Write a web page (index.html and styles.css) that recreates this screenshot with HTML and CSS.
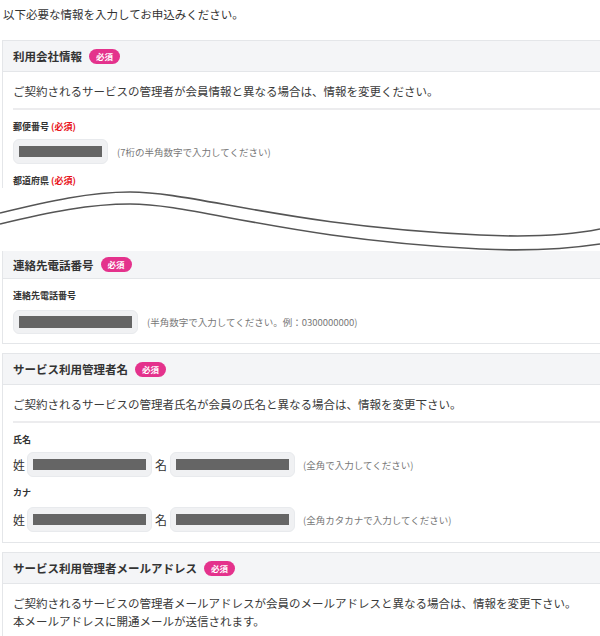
FILE: index.html
```html
<!DOCTYPE html>
<html lang="ja">
<head>
<meta charset="utf-8">
<link rel="stylesheet" href="styles.css">
</head>
<body>
<div class="page">
  <p class="intro">以下必要な情報を入力してお申込みください。</p>

  <section class="card card-cut-bottom">
    <div class="card-head"><h2 class="title">利用会社情報</h2><span class="badge">必須</span></div>
    <div class="card-body">
      <p class="desc">ご契約されるサービスの管理者が会員情報と異なる場合は、情報を変更ください。</p>
      <div class="sep"></div>
      <div class="label">郵便番号 <span class="req">(必須)</span></div>
      <div class="row">
        <div class="input w-zip"><div class="fill"></div></div>
        <span class="hint">(7桁の半角数字で入力してください)</span>
      </div>
      <div class="label label-next">都道府県 <span class="req">(必須)</span></div>
    </div>
  </section>

  <div class="break">
    <svg class="break-svg" width="600" height="63" viewBox="0 0 600 63">
      <path d="M0,25 C50,13 90,4 130,4 C195,4 285,38 480,47 C540,50 580,45 600,41" fill="none" stroke="#555" stroke-width="1.6"/>
      <path d="M0,36 C50,24 90,16 130,16 C195,16 285,51 480,61 C540,64 580,59 600,56" fill="none" stroke="#555" stroke-width="1.6"/>
    </svg>
  </div>

  <section class="card card-cut-top">
    <div class="card-head card-head-short"><h2 class="title">連絡先電話番号</h2><span class="badge">必須</span></div>
    <div class="card-body">
      <div class="label label-first">連絡先電話番号</div>
      <div class="row row-tel">
        <div class="input w-tel"><div class="fill"></div></div>
        <span class="hint">(半角数字で入力してください。例：0300000000)</span>
      </div>
    </div>
  </section>

  <section class="card">
    <div class="card-head"><h2 class="title">サービス利用管理者名</h2><span class="badge">必須</span></div>
    <div class="card-body">
      <p class="desc">ご契約されるサービスの管理者氏名が会員の氏名と異なる場合は、情報を変更下さい。</p>
      <div class="sep"></div>
      <div class="label">氏名</div>
      <div class="row">
        <span class="name-lab">姓</span>
        <div class="input w-name"><div class="fill"></div></div>
        <span class="name-lab name-lab-mid">名</span>
        <div class="input w-name"><div class="fill"></div></div>
        <span class="hint hint-name">(全角で入力してください)</span>
      </div>
      <div class="label label-next2">カナ</div>
      <div class="row row-kana">
        <span class="name-lab">姓</span>
        <div class="input w-name"><div class="fill"></div></div>
        <span class="name-lab name-lab-mid">名</span>
        <div class="input w-name"><div class="fill"></div></div>
        <span class="hint hint-name">(全角カタカナで入力してください)</span>
      </div>
    </div>
  </section>

  <section class="card card-last">
    <div class="card-head"><h2 class="title">サービス利用管理者メールアドレス</h2><span class="badge">必須</span></div>
    <div class="card-body">
      <p class="desc">ご契約されるサービスの管理者メールアドレスが会員のメールアドレスと異なる場合は、情報を変更下さい。<br>本メールアドレスに開通メールが送信されます。</p>
    </div>
  </section>
</div>
</body>
</html>
```

FILE: styles.css
```css
html, body {
  margin: 0;
  padding: 0;
  background: #fff;
}
body {
  font-family: "Noto Sans CJK JP", "Noto Sans", sans-serif;
  color: #333;
}
.page {
  width: 600px;
  height: 636px;
  overflow: hidden;
  padding-left: 2px;
  box-sizing: border-box;
}
.intro {
  margin: 0;
  padding-top: 6px;
  font-size: 11.5px;
  line-height: 16px;
  padding-left: 1px;
  color: #333;
}
.card {
  width: 620px;
  border: 1px solid #e4e6e9;
  background: #fff;
  margin-top: 9px;
}
.card-cut-bottom {
  margin-top: 18px;
  border-bottom: none;
  padding-bottom: 1px;
}
.card-cut-top {
  margin-top: 0;
  border-top: none;
}
.card-last {
  border-bottom: none;
}
.card-head {
  height: 30px;
  display: flex;
  align-items: center;
  padding: 0 10px;
  background: #f4f5f7;
  border-bottom: 1px solid #e4e6e9;
}
.card-head-short {
  height: 27px;
}
.title {
  margin: 0;
  font-size: 11.5px;
  font-weight: bold;
  color: #333;
  line-height: 16px;
}
.badge {
  margin-left: 7px;
  height: 15px;
  width: 31px;
  border-radius: 8px;
  background: #e4328c;
  color: #fff;
  font-size: 8.5px;
  font-weight: bold;
  line-height: 15px;
  text-align: center;
}
.card-body {
  padding: 0 10px 10px;
}
.card-cut-bottom .card-body {
  padding-bottom: 0;
}
.card-cut-top .card-body {
  padding-bottom: 9px;
}
.card-last .card-body {
  padding-bottom: 30px;
}
.desc {
  margin: 10px 0 0;
  font-size: 11.5px;
  line-height: 18px;
  color: #3a3a3a;
}
.sep {
  margin-top: 8px;
  height: 2px;
  background: #ececee;
}
.label {
  margin-top: 11px;
  font-size: 9px;
  line-height: 12px;
  font-weight: bold;
  color: #333;
}
.label-next {
  margin-top: 11px;
}
.label-next2 {
  margin-top: 10px;
}
.label-first {
  margin-top: 11px;
}
.req {
  color: #e8141b;
}
.row {
  display: flex;
  align-items: center;
  margin-top: 6px;
}
.row-tel {
  margin-top: 8px;
}
.row-kana {
  margin-top: 8px;
}
.input {
  height: 25px;
  box-sizing: border-box;
  padding: 6px 5px 6px 5px;
  background: #f0f1f3;
  border: 1px solid #e8eaed;
  border-radius: 6px;
}
.row-tel .input {
  height: 24px;
  padding-top: 5px;
  padding-bottom: 5px;
}
.fill {
  height: 100%;
  background: #656565;
}
.w-zip { width: 95px; }
.w-tel { width: 125px; }
.w-name { width: 125px; }
.hint {
  margin-left: 9px;
  font-size: 9.5px;
  color: #777;
  line-height: 12px;
}
.hint-name {
  margin-left: 8px;
}
.name-lab {
  font-size: 12px;
  line-height: 16px;
  color: #333;
  margin-right: 2px;
}
.name-lab-mid {
  margin-left: 3px;
  margin-right: 3px;
}
.break {
  margin-left: -2px;
  width: 600px;
  height: 63px;
  background: #fff;
}
.break-svg {
  display: block;
}
```
